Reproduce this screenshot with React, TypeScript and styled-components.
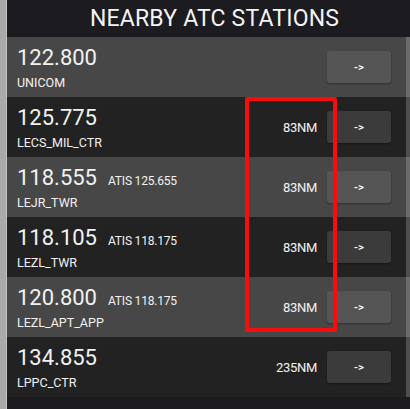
import styled, { createGlobalStyle } from "styled-components"

const GlobalStyle = createGlobalStyle`
  html, body {
    margin: 0;
    padding: 0;
    background: #a9a9a9;
    font-family: Roboto, "Liberation Sans", Arial, sans-serif;
  }
`

type Station = {
  freq: string
  name: string
  atis?: string
  dist?: string
}

const stations: Station[] = [
  { freq: "122.800", name: "UNICOM" },
  { freq: "125.775", name: "LECS_MIL_CTR", dist: "83NM" },
  { freq: "118.555", name: "LEJR_TWR", atis: "ATIS 125.655", dist: "83NM" },
  { freq: "118.105", name: "LEZL_TWR", atis: "ATIS 118.175", dist: "83NM" },
  { freq: "120.800", name: "LEZL_APT_APP", atis: "ATIS 118.175", dist: "83NM" },
  { freq: "134.855", name: "LPPC_CTR", dist: "235NM" },
]

const App = () => {
  return (
    <>
      <GlobalStyle />
      <Frame>
        <Behind />
        <Panel>
          <Header>NEARBY ATC STATIONS</Header>
          <List>
            {stations.map((s, i) => (
              <Row key={s.name} light={i % 2 === 0}>
                <Info>
                  <FreqLine>
                    <Freq>{s.freq}</Freq>
                    {s.atis ? <Atis>{s.atis}</Atis> : null}
                  </FreqLine>
                  <Callsign>{s.name}</Callsign>
                </Info>
                {s.dist ? <Distance>{s.dist}</Distance> : null}
                <GoButton light={i % 2 === 0}>-&gt;</GoButton>
              </Row>
            ))}
            <Thumb />
          </List>
          <Footer />
          <Highlight />
        </Panel>
      </Frame>
    </>
  )
}

export default App

const Frame = styled.div`
  width: 410px;
  height: 409px;
  display: flex;
  overflow: hidden;
`

const Behind = styled.div`
  width: 6px;
  flex-shrink: 0;
  background: #a9a9a9;
  border-right: 1px solid #c4c4c4;
`

const Panel = styled.div`
  flex: 1;
  display: flex;
  flex-direction: column;
  background: #1c1b1f;
  position: relative;
`

const Header = styled.div`
  height: 37px;
  display: flex;
  align-items: center;
  justify-content: center;
  padding-left: 12px;
  color: #f4f4f4;
  font-size: 23px;
  letter-spacing: 0.2px;
  background: #1c1b1f;
`

const List = styled.div`
  display: flex;
  flex-direction: column;
  position: relative;
`

const Row = styled.div<{ light: boolean }>`
  height: 60px;
  display: flex;
  align-items: center;
  padding: 0 19px 0 10px;
  background: ${(p) => (p.light ? "#474747" : "#222222")};
`

const Info = styled.div`
  flex: 1;
  display: flex;
  flex-direction: column;
  padding-top: 1px;
`

const FreqLine = styled.div`
  display: flex;
  align-items: baseline;
  gap: 11px;
`

const Freq = styled.span`
  color: #f2f2f2;
  font-size: 22px;
  line-height: 26px;
`

const Atis = styled.span`
  color: #f2f2f2;
  font-size: 12px;
  letter-spacing: -0.2px;
`

const Callsign = styled.span`
  color: #f2f2f2;
  font-size: 12.5px;
  line-height: 15px;
  margin-top: 4px;
`

const Distance = styled.span`
  color: #f2f2f2;
  font-size: 13px;
  letter-spacing: -0.3px;
  margin-right: 10px;
`

const GoButton = styled.div<{ light: boolean }>`
  width: 64px;
  height: 32px;
  border-radius: 3px;
  display: flex;
  align-items: center;
  justify-content: center;
  color: #ffffff;
  font-size: 11.5px;
  font-weight: 500;
  background: ${(p) => (p.light ? "#555555" : "#3b3b3b")};
  box-shadow: 0 1px 2px rgba(0, 0, 0, 0.35);
`

const Thumb = styled.div`
  position: absolute;
  top: 0;
  right: 0;
  bottom: 0;
  width: 4px;
  background: rgba(255, 255, 255, 0.2);
`

const Footer = styled.div`
  height: 12px;
  background: #1c1b1f;
`

const Highlight = styled.div`
  position: absolute;
  left: 238px;
  top: 97px;
  width: 84px;
  height: 227px;
  border: 4px solid #f70d0d;
  border-radius: 2px;
`
